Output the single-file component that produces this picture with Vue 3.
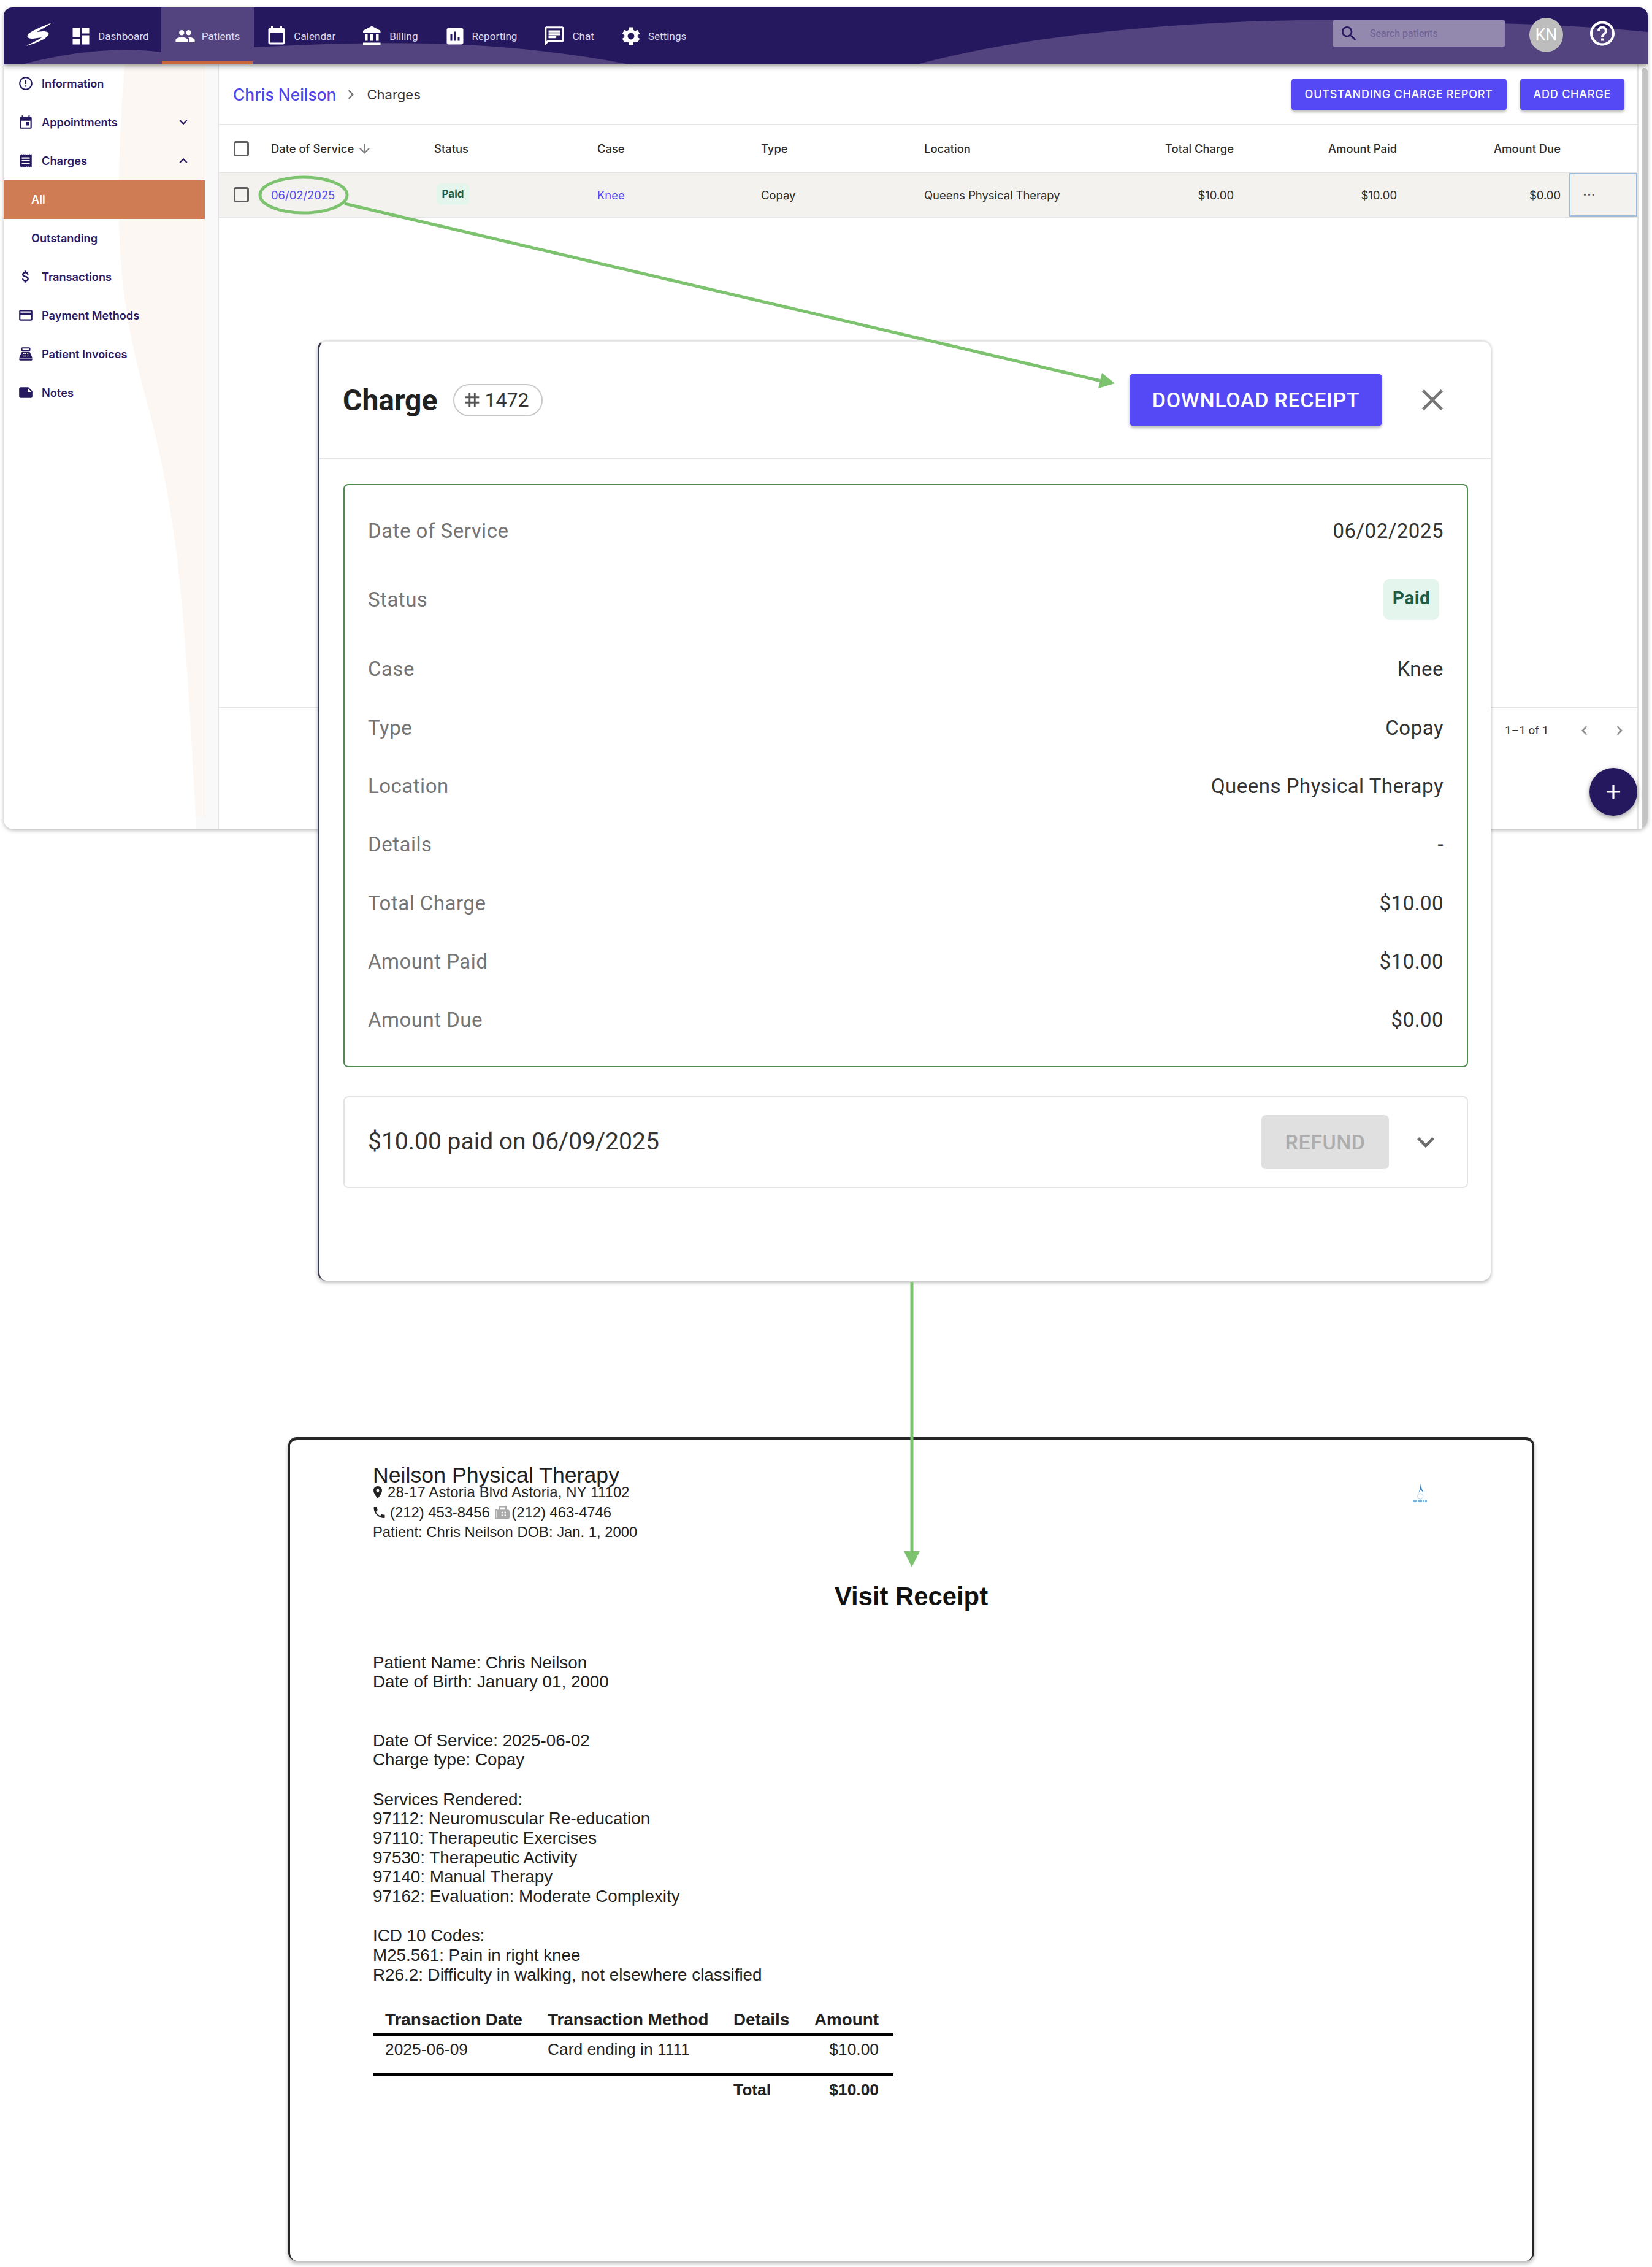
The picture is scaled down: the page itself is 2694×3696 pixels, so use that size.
<script setup>
const P = {
  dashboard: 'M3 13h8V3H3v10zm0 8h8v-6H3v6zm10 0h8V11h-8v10zm0-18v6h8V3h-8z',
  people: 'M16 11c1.66 0 2.99-1.34 2.99-3S17.66 5 16 5c-1.66 0-3 1.34-3 3s1.34 3 3 3zm-8 0c1.66 0 2.99-1.34 2.99-3S9.66 5 8 5C6.34 5 5 6.34 5 8s1.34 3 3 3zm0 2c-2.33 0-7 1.17-7 3.5V19h14v-2.5c0-2.33-4.67-3.5-7-3.5zm8 0c-.29 0-.62.02-.97.05 1.16.84 1.97 1.97 1.97 3.45V19h6v-2.5c0-2.33-4.67-3.5-7-3.5z',
  calendar: 'M19 3h-1V1h-2v2H8V1H6v2H5c-1.11 0-2 .9-2 2v14a2 2 0 0 0 2 2h14c1.1 0 2-.9 2-2V5c0-1.1-.9-2-2-2zm0 16H5V8h14v11z',
  bank: 'M4 10v7h3v-7H4zm6 0v7h3v-7h-3zM2 22h19v-3H2v3zm14-12v7h3v-7h-3zm-4.5-9L2 6v2h19V6l-9.5-5z',
  report: 'M19 3H5c-1.1 0-2 .9-2 2v14c0 1.1.9 2 2 2h14c1.1 0 2-.9 2-2V5c0-1.1-.9-2-2-2zM9 17H7v-7h2v7zm4 0h-2V7h2v10zm4 0h-2v-4h2v4z',
  chat: 'M20 2H4c-1.1 0-1.99.9-1.99 2L2 22l4-4h14c1.1 0 2-.9 2-2V4c0-1.1-.9-2-2-2zm0 14H5.17L4 17.17V4h16v12zM6 12h8v2H6zm0-3h12v2H6zm0-3h12v2H6z',
  settings: 'M19.14 12.94c.04-.3.06-.61.06-.94 0-.32-.02-.64-.07-.94l2.03-1.58c.18-.14.23-.41.12-.61l-1.92-3.32c-.12-.22-.37-.29-.59-.22l-2.39.96c-.5-.38-1.03-.7-1.62-.94l-.36-2.54c-.04-.24-.24-.41-.48-.41h-3.84c-.24 0-.43.17-.47.41l-.36 2.54c-.59.24-1.13.57-1.62.94l-2.39-.96c-.22-.08-.47 0-.59.22L2.74 8.87c-.12.21-.08.47.12.61l2.03 1.58c-.05.3-.09.63-.09.94s.02.64.07.94l-2.03 1.58c-.18.14-.23.41-.12.61l1.92 3.32c.12.22.37.29.59.22l2.39-.96c.5.38 1.03.7 1.62.94l.36 2.54c.05.24.24.41.48.41h3.84c.24 0 .44-.17.47-.41l.36-2.54c.59-.24 1.13-.56 1.62-.94l2.39.96c.22.08.47 0 .59-.22l1.92-3.32c.12-.22.07-.47-.12-.61l-2.01-1.58zM12 15.6c-1.98 0-3.6-1.62-3.6-3.6s1.62-3.6 3.6-3.6 3.6 1.62 3.6 3.6-1.62 3.6-3.6 3.6z',
  search: 'M15.5 14h-.79l-.28-.27C15.41 12.59 16 11.11 16 9.5 16 5.91 13.09 3 9.5 3S3 5.91 3 9.5 5.91 16 9.5 16c1.61 0 3.09-.59 4.23-1.57l.27.28v.79l5 4.99L20.49 19l-4.99-5zm-6 0C7.01 14 5 11.99 5 9.5S7.01 5 9.5 5 14 7.01 14 9.5 11.99 14 9.5 14z',
  help: 'M11 18h2v-2h-2v2zm1-16C6.48 2 2 6.48 2 12s4.48 10 10 10 10-4.48 10-10S17.52 2 12 2zm0 18c-4.41 0-8-3.59-8-8s3.59-8 8-8 8 3.59 8 8-3.59 8-8 8zm0-14c-2.21 0-4 1.79-4 4h2c0-1.1.9-2 2-2s2 .9 2 2c0 2-3 1.75-3 5h2c0-2.25 3-2.5 3-5 0-2.21-1.79-4-4-4z',
  info: 'M11 15h2v2h-2zm0-8h2v6h-2zm.99-5C6.47 2 2 6.48 2 12s4.47 10 9.99 10C17.52 22 22 17.52 22 12S17.52 2 11.99 2zM12 20c-4.42 0-8-3.58-8-8s3.58-8 8-8 8 3.58 8 8-3.58 8-8 8z',
  event: 'M19 4h-1V2h-2v2H8V2H6v2H5c-1.11 0-1.99.9-1.99 2L3 20a2 2 0 0 0 2 2h14c1.1 0 2-.9 2-2V6c0-1.1-.9-2-2-2zm0 16H5V10h14v10zM17 12h-5v5h5v-5z',
  receipt: 'M18 17H6v-2h12v2zm0-4H6v-2h12v2zm0-4H6V7h12v2zM3 22l1.5-1.5L6 22l1.5-1.5L9 22l1.5-1.5L12 22l1.5-1.5L15 22l1.5-1.5L18 22l1.5-1.5L21 22V2l-1.5 1.5L18 2l-1.5 1.5L15 2l-1.5 1.5L12 2l-1.5 1.5L9 2 7.5 3.5 6 2 4.5 3.5 3 2v20z',
  dollar: 'M11.8 10.9c-2.27-.59-3-1.2-3-2.15 0-1.09 1.01-1.85 2.7-1.85 1.78 0 2.44.85 2.5 2.1h2.21c-.07-1.72-1.12-3.3-3.21-3.81V3h-3v2.16c-1.94.42-3.5 1.68-3.5 3.61 0 2.31 1.91 3.46 4.7 4.13 2.5.6 3 1.48 3 2.41 0 .69-.49 1.79-2.7 1.79-2.06 0-2.87-.92-2.98-2.1h-2.2c.12 2.19 1.76 3.42 3.68 3.83V21h3v-2.15c1.95-.37 3.5-1.5 3.5-3.55 0-2.84-2.43-3.81-4.7-4.4z',
  card: 'M20 4H4c-1.11 0-1.99.89-1.99 2L2 18c0 1.11.89 2 2 2h16c1.11 0 2-.89 2-2V6c0-1.11-.89-2-2-2zm0 14H4v-6h16v6zm0-10H4V6h16v2z',
  register: 'M17 2H7c-1.1 0-2 .9-2 2v2c0 1.1.9 2 2 2h10c1.1 0 2-.9 2-2V4c0-1.1-.9-2-2-2zm0 4H7V4h10v2zm3 16H4c-1.1 0-2-.9-2-2v-1h20v1c0 1.1-.9 2-2 2zm-1.47-11.81C18.21 9.47 17.49 9 16.7 9H7.3c-.79 0-1.51.47-1.83 1.19L2 18h20l-3.47-7.81zM9.5 16h-1c-.28 0-.5-.22-.5-.5s.22-.5.5-.5h1c.28 0 .5.22.5.5s-.22.5-.5.5zm0-2h-1c-.28 0-.5-.22-.5-.5s.22-.5.5-.5h1c.28 0 .5.22.5.5s-.22.5-.5.5zm0-2h-1c-.28 0-.5-.22-.5-.5s.22-.5.5-.5h1c.28 0 .5.22.5.5s-.22.5-.5.5zm3 4h-1c-.28 0-.5-.22-.5-.5s.22-.5.5-.5h1c.28 0 .5.22.5.5s-.22.5-.5.5zm0-2h-1c-.28 0-.5-.22-.5-.5s.22-.5.5-.5h1c.28 0 .5.22.5.5s-.22.5-.5.5zm0-2h-1c-.28 0-.5-.22-.5-.5s.22-.5.5-.5h1c.28 0 .5.22.5.5s-.22.5-.5.5zm3 4h-1c-.28 0-.5-.22-.5-.5s.22-.5.5-.5h1c.28 0 .5.22.5.5s-.22.5-.5.5zm0-2h-1c-.28 0-.5-.22-.5-.5s.22-.5.5-.5h1c.28 0 .5.22.5.5s-.22.5-.5.5zm0-2h-1c-.28 0-.5-.22-.5-.5s.22-.5.5-.5h1c.28 0 .5.22.5.5s-.22.5-.5.5z',
  note: 'M22 10l-6-6H4c-1.1 0-2 .9-2 2v12.01c0 1.1.9 1.99 2 1.99l16-.01c1.1 0 2-.89 2-1.99v-8zm-7-4.5l5.5 5.5H15V5.5z',
  down: 'M7.41 8.59L12 13.17l4.59-4.58L18 10l-6 6-6-6 1.41-1.41z',
  up: 'M7.41 15.41L12 10.83l4.59 4.58L18 14l-6-6-6 6z',
  close: 'M19 6.41L17.59 5 12 10.59 6.41 5 5 6.41 10.59 12 5 17.59 6.41 19 12 13.41 17.59 19 19 17.59 13.41 12z',
  tag: 'M20 10V8h-4V4h-2v4h-4V4H8v4H4v2h4v4H4v2h4v4h2v-4h4v4h2v-4h4v-2h-4v-4h4zm-6 4h-4v-4h4v4z',
  place: 'M12 2C8.13 2 5 5.13 5 9c0 5.25 7 13 7 13s7-7.75 7-13c0-3.87-3.13-7-7-7zm0 9.5c-1.38 0-2.5-1.12-2.5-2.5s1.12-2.5 2.5-2.5 2.5 1.12 2.5 2.5-1.12 2.5-2.5 2.5z',
  phone: 'M6.62 10.79c1.44 2.83 3.76 5.14 6.59 6.59l2.2-2.2c.27-.27.67-.36 1.02-.24 1.12.37 2.33.57 3.57.57.55 0 1 .45 1 1V20c0 .55-.45 1-1 1-9.39 0-17-7.61-17-17 0-.55.45-1 1-1h3.5c.55 0 1 .45 1 1 0 1.25.2 2.45.57 3.57.11.35.03.74-.25 1.02l-2.2 2.2z',
  arrow: 'M20 12l-1.41-1.41L13 16.17V4h-2v12.17l-5.58-5.59L4 12l8 8 8-8z',
  prev: 'M15.41 7.41L14 6l-6 6 6 6 1.41-1.41L10.83 12z',
  next: 'M10 6L8.59 7.41 13.17 12l-4.58 4.59L10 18l6-6z',
  plus: 'M19 13h-6v6h-2v-6H5v-2h6V5h2v6h6v2z',
  fax: 'M19 8h-1V3H7v5H5v-1H3a1 1 0 0 0-1 1v12a1 1 0 0 0 1 1h16a3 3 0 0 0 3-3v-7a3 3 0 0 0-3-3zM4 19V9h1v10H4zm5-14h7v3H9V5zm4 12h-2v-2h2v2zm0-4h-2v-2h2v2zm4 4h-2v-2h2v2zm0-4h-2v-2h2v2z'
}

const nav = [
  { label: 'Dashboard', icon: 'dashboard', w: 36 },
  { label: 'Patients', icon: 'people', active: true, w: 34 },
  { label: 'Calendar', icon: 'calendar', w: 36 },
  { label: 'Billing', icon: 'bank', w: 36 },
  { label: 'Reporting', icon: 'report', w: 36 },
  { label: 'Chat', icon: 'chat', w: 38 },
  { label: 'Settings', icon: 'settings', w: 36 }
]
const side = [
  { label: 'Information', icon: 'info' },
  { label: 'Appointments', icon: 'event', chev: 'down' },
  { label: 'Charges', icon: 'receipt', chev: 'up' },
  { label: 'All', sub: true, active: true },
  { label: 'Outstanding', sub: true },
  { label: 'Transactions', icon: 'dollar' },
  { label: 'Payment Methods', icon: 'card' },
  { label: 'Patient Invoices', icon: 'register' },
  { label: 'Notes', icon: 'note' }
]
const rows = [
  { k: 'Date of Service', v: '06/02/2025' },
  { k: 'Status', chip: 'Paid' },
  { k: 'Case', v: 'Knee' },
  { k: 'Type', v: 'Copay' },
  { k: 'Location', v: 'Queens Physical Therapy' },
  { k: 'Details', v: '-' },
  { k: 'Total Charge', v: '$10.00' },
  { k: 'Amount Paid', v: '$10.00' },
  { k: 'Amount Due', v: '$0.00' }
]
const services = [
  '97112: Neuromuscular Re-education',
  '97110: Therapeutic Exercises',
  '97530: Therapeutic Activity',
  '97140: Manual Therapy',
  '97162: Evaluation: Moderate Complexity'
]
</script>

<template>
  <div class="page">
    <section class="window">
      <header class="topbar">
        <svg class="waves" viewBox="0 0 2681 93" preserveAspectRatio="none">
          <path d="M30 93C110 72 190 64 257 73L257 0 408 0 408 65C600 55 800 50 1020 93Z" fill="#53437f" />
          <path d="M1490 93C1700 36 2000 18 2200 21 2400 24 2560 28 2681 40L2681 93Z" fill="#53437f" />
        </svg>
        <svg class="logo" viewBox="0 0 44 38">
          <path d="M44 0C30 6 10 13 5 20 3 24 7 26 14 26L28 24C22 29 8 34 3 38 16 34 34 28 39 20 41 16 37 14 30 14L20 15C28 10 38 6 44 0Z" fill="#fff" />
        </svg>
        <nav class="tabs">
          <a v-for="n in nav" :key="n.label" class="tab" :class="{ active: n.active }">
            <svg class="tab-icon" :style="{ width: n.w + 'px', height: n.w + 'px' }" viewBox="0 0 24 24"><path :d="P[n.icon]" /></svg>
            <span>{{ n.label }}</span>
          </a>
        </nav>
        <div class="top-right">
          <div class="search">
            <svg viewBox="0 0 24 24"><path :d="P.search" /></svg>
            <span>Search patients</span>
          </div>
          <div class="avatar">KN</div>
          <svg class="help" viewBox="2 2 20 20"><path :d="P.help" /></svg>
        </div>
      </header>

      <div class="body">
        <aside class="sidebar">
          <svg class="swoosh" viewBox="0 0 329 1226" preserveAspectRatio="none">
            <path d="M198 0C190 100 186 200 189 275 192 350 200 420 226 520 245 590 262 650 281 785 294 880 305 1050 314 1226L329 1226 329 0Z" fill="#fdf7f4" />
          </svg>
          <div v-for="s in side" :key="s.label" class="side-row" :class="{ sub: s.sub, active: s.active }">
            <svg v-if="s.icon" class="side-icon" viewBox="0 0 24 24"><path :d="P[s.icon]" /></svg>
            <span>{{ s.label }}</span>
            <svg v-if="s.chev" class="side-chev" viewBox="0 0 24 24"><path :d="P[s.chev]" /></svg>
          </div>
        </aside>
        <div class="gutter"></div>

        <main class="main">
          <div class="crumbs">
            <a class="crumb-link">Chris Neilson</a>
            <svg class="crumb-sep" viewBox="0 0 24 24"><path :d="P.next" /></svg>
            <span class="crumb-now">Charges</span>
            <div class="actions">
              <button class="btn">OUTSTANDING CHARGE REPORT</button>
              <button class="btn">ADD CHARGE</button>
            </div>
          </div>

          <div class="grid head">
            <div class="cell check"><i class="box"></i></div>
            <div class="cell">Date of Service<svg class="sort" viewBox="0 0 24 24"><path :d="P.arrow" /></svg></div>
            <div class="cell">Status</div>
            <div class="cell">Case</div>
            <div class="cell">Type</div>
            <div class="cell">Location</div>
            <div class="cell r">Total Charge</div>
            <div class="cell r">Amount Paid</div>
            <div class="cell r">Amount Due</div>
            <div class="cell"></div>
          </div>
          <div class="grid row">
            <div class="cell check"><i class="box"></i></div>
            <div class="cell link">06/02/2025</div>
            <div class="cell"><span class="chip small">Paid</span></div>
            <div class="cell link">Knee</div>
            <div class="cell">Copay</div>
            <div class="cell">Queens Physical Therapy</div>
            <div class="cell r">$10.00</div>
            <div class="cell r">$10.00</div>
            <div class="cell r">$0.00</div>
            <div class="cell dots">···</div>
          </div>
          <div class="spacer"></div>
          <div class="pager">
            <span>1–1 of 1</span>
            <svg viewBox="0 0 24 24"><path :d="P.prev" /></svg>
            <svg viewBox="0 0 24 24"><path :d="P.next" /></svg>
          </div>
        </main>
        <div class="scrollbar"></div>
      </div>
      <button class="fab"><svg viewBox="0 0 24 24"><path :d="P.plus" /></svg></button>
    </section>

    <section class="modal">
      <div class="modal-head">
        <h2>Charge</h2>
        <span class="pill"><svg viewBox="0 0 24 24"><path :d="P.tag" /></svg>1472</span>
        <button class="btn big">DOWNLOAD RECEIPT</button>
        <svg class="x" viewBox="5 5 14 14"><path :d="P.close" /></svg>
      </div>
      <div class="modal-body">
        <div class="details">
          <div v-for="r in rows" :key="r.k" class="d-row" :class="{ tall: r.chip }">
            <span class="d-key">{{ r.k }}</span>
            <span v-if="r.chip" class="chip large">{{ r.chip }}</span>
            <span v-else class="d-val">{{ r.v }}</span>
          </div>
        </div>
        <div class="txn">
          <span>$10.00 paid on 06/09/2025</span>
          <button class="refund">REFUND</button>
          <svg viewBox="0 0 24 24"><path :d="P.down" /></svg>
        </div>
      </div>
    </section>

    <section class="receipt">
      <div class="r-top">
        <h1>Neilson Physical Therapy</h1>
        <p class="r-line addr"><svg viewBox="5 2 14 20"><path :d="P.place" /></svg>28-17 Astoria Blvd Astoria, NY 11102</p>
        <p class="r-line"><svg class="ph" viewBox="3 3 18 18"><path :d="P.phone" /></svg>(212) 453-8456 <svg class="fax" viewBox="2 3 20 18"><path :d="P.fax" /></svg>(212) 463-4746</p>
        <p class="r-line">Patient: Chris Neilson DOB: Jan. 1, 2000</p>
        <svg class="r-logo" viewBox="0 0 30 32">
          <path d="M16 0l1.5 9 3 6-5.5-4-3 6 2.5-8z" fill="#3f86c0" />
          <path d="M15 17a4.5 4.5 0 1 0 .1 0" fill="none" stroke="#c4dcee" stroke-width="1.2" />
          <path d="M3 29h24" stroke="#7fb2d9" stroke-width="3.4" stroke-dasharray="3 1" />
        </svg>
      </div>
      <h3 class="r-title">Visit Receipt</h3>
      <div class="r-body">
        <p>Patient Name: Chris Neilson<br />Date of Birth: January 01, 2000</p>
        <p class="gap-a">Date Of Service: 2025-06-02<br />Charge type: Copay</p>
        <p class="gap-b">Services Rendered:<br /><template v-for="s in services" :key="s">{{ s }}<br /></template></p>
        <p class="gap-c">ICD 10 Codes:<br />M25.561: Pain in right knee<br />R26.2: Difficulty in walking, not elsewhere classified</p>
        <div class="r-table">
          <div class="t-row t-head"><b>Transaction Date</b><b>Transaction Method</b><b>Details</b><b class="tr">Amount</b></div>
          <div class="t-row t-data"><span>2025-06-09</span><span>Card ending in 1111</span><span></span><span class="tr">$10.00</span></div>
          <div class="t-row t-total"><span></span><span></span><b>Total</b><b class="tr">$10.00</b></div>
        </div>
      </div>
    </section>

    <svg class="arrows" viewBox="0 0 2694 3696">
      <ellipse cx="495" cy="318" rx="71" ry="29" fill="none" stroke="#7dc36f" stroke-width="5" />
      <path d="M562 332L1800 622" stroke="#7dc36f" stroke-width="5" />
      <path d="M1818 625L1797 608 1791 633Z" fill="#7dc36f" />
      <path d="M1487 2090V2532" stroke="#7dc36f" stroke-width="5" />
      <path d="M1474 2529H1500L1487 2555Z" fill="#7dc36f" />
    </svg>
  </div>
</template>

<style scoped>
.page { position: relative; width: 2694px; height: 3696px; background: #fff; overflow: hidden; font-family: Roboto, "Liberation Sans", sans-serif; }
.window { position: relative; margin: 12px 0 0 6px; width: 2681px; height: 1340px; background: #fff; border-radius: 14px 14px 16px 16px; box-shadow: 0 2px 6px rgba(0, 0, 0, .28); overflow: hidden; }

.topbar { position: relative; height: 93px; display: flex; align-items: center; background: #26185f; box-shadow: 0 3px 8px rgba(0, 0, 0, .4); z-index: 2; }
.waves { position: absolute; inset: 0; width: 100%; height: 100%; }
.logo { position: relative; width: 44px; height: 38px; margin: -5px 0 0 34px; flex: none; }
.tabs { position: relative; display: flex; height: 100%; margin-left: 11px; }
.tab { display: flex; align-items: center; gap: 10px; padding: 0 21px; font-size: 17.1px; color: #ddd9e9; }
.tab:first-child { padding-left: 19px; }
.tab-icon { fill: #fff; flex: none; }
.tab.active { box-shadow: inset 0 -5px 0 #c9673b; }
.top-right { position: relative; margin-left: auto; display: flex; align-items: center; }
.search { width: 280px; height: 43px; margin-top: -8px; display: flex; align-items: center; gap: 18px; padding-left: 10px; box-sizing: border-box; background: #9389ae; border-radius: 2px; font-size: 16px; color: #6d6093; }
.search svg { width: 32px; height: 32px; fill: #26185f; }
.avatar { width: 55px; height: 56px; margin: -4px 0 0 40px; border-radius: 50%; background: #bdbdbd; color: #fff; font-size: 27px; display: flex; align-items: center; justify-content: center; }
.help { width: 40px; height: 41px; margin: -9px 54px 0 44px; fill: #fff; }

.body { display: flex; height: 1247px; }
.sidebar { position: relative; width: 328px; height: 1226px; flex: none; border-right: 1px solid #f1eeee; box-sizing: content-box; }
.sidebar::after { content: ""; position: absolute; left: 314px; top: 100%; width: 15px; height: 21px; background: #f9f9f9; }
.swoosh { position: absolute; inset: 0; width: 100%; height: 100%; }
.side-row { position: relative; height: 63px; display: flex; align-items: center; gap: 13px; padding: 0 0 2px 23px; box-sizing: border-box; font: 600 18.2px Inter, Roboto, sans-serif; color: #2a1b66; }
.side-row.sub { padding-left: 45px; }
.side-row.active { background: #cf7c54; color: #fff; }
.side-icon { width: 26px; height: 26px; fill: #26185f; flex: none; }
.side-chev { position: absolute; left: 280px; width: 26px; height: 26px; fill: #26185f; }
.gutter { width: 20px; flex: none; background: #f9f9f9; border-right: 2px solid #e4e4e4; }
.main { flex: 1; min-width: 0; display: flex; flex-direction: column; }
.scrollbar { width: 17px; flex: none; border-left: 2px solid #e4e4e4; position: relative; box-sizing: border-box; }
.scrollbar::after { content: ""; position: absolute; left: 5px; top: 6px; bottom: 0; width: 10px; background: #c4c4c4; border-radius: 5px; }

.crumbs { height: 99px; flex: none; display: flex; align-items: center; padding: 0 21px 0 23px; border-bottom: 2px solid #e6e6e6; box-sizing: border-box; }
.crumb-link { font: 500 26.4px Inter, Roboto, sans-serif; color: #4f45e8; }
.crumb-sep { width: 30px; height: 30px; fill: #777; margin: 0 11px 0 9px; }
.crumb-now { font: 400 22px Inter, Roboto, sans-serif; color: #333; }
.actions { margin-left: auto; display: flex; gap: 22px; }
.btn { height: 52px; padding: 0 22px; border: 0; border-radius: 5px; background: #5549f6; color: #fff; font: 500 18px Inter, Roboto, sans-serif; letter-spacing: .75px; box-shadow: 0 3px 4px rgba(0, 0, 0, .25); white-space: nowrap; }
.btn.big { height: 86px; padding: 0; width: 412px; margin-left: auto; font: 500 34px Roboto, sans-serif; letter-spacing: .7px; border-radius: 7px; }

.grid { display: grid; grid-template-columns: 69px 266px 266px 267px 266px 266px 271px 266px 267px 109px; flex: none; font: 400 18.4px Inter, Roboto, sans-serif; color: #2b2b2b; box-sizing: border-box; }
.head { height: 78px; font-weight: 500; border-bottom: 2px solid #e4e4e4; }
.row { height: 73px; background: #f3f2ee; border-bottom: 2px solid #e4e4e4; }
.cell { display: flex; align-items: center; padding: 0 16px; min-width: 0; white-space: nowrap; }
.cell.r { justify-content: flex-end; }
.cell.check { padding: 0 0 0 24px; }
.box { width: 25px; height: 25px; border: 3px solid #5f5f5f; border-radius: 4px; box-sizing: border-box; }
.sort { width: 25px; height: 25px; fill: #808080; margin-left: 5px; }
.link { color: #5348f0; }
.dots { margin-left: -2px; border: 2px solid #9bbde0; font-size: 24px; color: #555; padding-left: 20px; }
.chip { display: inline-flex; align-items: center; justify-content: center; background: #e3f5ec; color: #1f5c47; font-weight: 700; }
.chip.small { width: 53px; height: 35px; margin-left: 4px; border-radius: 7px; font-size: 17px; margin-top: -3px; }
.chip.large { width: 91px; height: 67px; padding-bottom: 5px; box-sizing: border-box; border-radius: 10px; font: 700 30px Roboto, sans-serif; letter-spacing: .4px; margin-right: 7px; }
.spacer { height: 799px; flex: none; border-bottom: 2px solid #e4e4e4; box-sizing: border-box; }
.pager { display: flex; align-items: flex-start; padding: 25px 0 0 2097px; font-size: 19px; color: #333; }
.pager svg { width: 30px; height: 30px; fill: #8a8a8a; margin-top: -3px; }
.pager svg:first-of-type { margin-left: 44px; }
.pager svg:last-of-type { margin-left: 27px; }

.fab { position: absolute; left: 2586px; top: 1240px; width: 78px; height: 78px; border: 0; border-radius: 50%; background: #26185f; box-shadow: 0 3px 8px rgba(0, 0, 0, .4); display: flex; align-items: center; justify-content: center; padding: 0; }
.fab svg { width: 38px; height: 38px; fill: #fff; }

.modal { position: absolute; left: 518px; top: 555px; width: 1913px; height: 1533px; box-sizing: border-box; background: #fff; border-left: 3px solid #3c3c50; border-top: 2px solid #e6e6e6; border-radius: 14px; box-shadow: 0 3px 6px rgba(0, 0, 0, .28), 1px 0 3px rgba(0, 0, 0, .08); z-index: 3; }
.modal-head { height: 192px; display: flex; align-items: center; padding: 0 78px 0 38px; border-bottom: 2px solid #e4e4e4; box-sizing: border-box; }
.modal-head h2 { margin: 0; font-size: 48px; font-weight: 700; color: #212121; }
.pill { margin-left: 26px; height: 53px; width: 146px; box-sizing: border-box; border: 2px solid #c8c8c8; border-radius: 27px; display: flex; align-items: center; padding-left: 12px; gap: 3px; font-size: 32px; color: #333; }
.pill svg { width: 34px; height: 34px; fill: #555; }
.x { width: 34px; height: 34px; fill: #757575; margin-left: 65px; flex: none; }
.modal-body { padding: 40px 37px 0 39px; }
.details { height: 951px; border: 2px solid #4f8a4f; border-radius: 8px; padding: 27px 38px; box-sizing: border-box; }
.d-row { height: 95.3px; display: flex; align-items: center; justify-content: space-between; font-size: 33px; letter-spacing: .5px; }
.d-row.tall { height: 130px; padding-bottom: 2px; box-sizing: border-box; }
.d-key { color: #757575; }
.d-val { color: #333; }
.txn { margin-top: 47px; height: 150px; display: flex; align-items: center; padding: 0 38px; box-sizing: border-box; border: 2px solid #e4e4e4; border-radius: 8px; font-size: 39px; color: #333; }
.txn span { margin-top: -3px; }
.refund { margin-left: auto; width: 208px; height: 88px; border: 0; border-radius: 7px; background: #e0e0e0; color: #adadad; font: 500 34px Roboto, sans-serif; letter-spacing: .5px; }
.txn svg { width: 56px; height: 56px; fill: #6a6a6a; margin: 0 1px 0 32px; }

.receipt { width: 2032px; height: 1343px; margin: 991px 0 0 470px; box-sizing: border-box; background: #fff; border: 3px solid #262626; border-top-width: 5px; border-bottom: 0; border-radius: 14px; box-shadow: 0 4px 6px rgba(0, 0, 0, .3); font-family: "Liberation Sans", Arial, sans-serif; color: #222; }
.r-top { position: relative; padding: 37px 0 0 135px; }
.r-top h1 { margin: 4px 0 -4px; font-size: 35.7px; line-height: 32px; font-weight: 400; color: #1f1f1f; }
.r-line { margin: 0; height: 32.5px; line-height: 32.5px; font-size: 23.8px; display: flex; align-items: center; gap: 7px; white-space: pre; }
.r-line.addr { gap: 8px; letter-spacing: .2px; }
.r-line svg { height: 20px; width: 16px; fill: #222; }
.r-line svg.ph { width: 21px; height: 18px; }
.r-line svg.fax { width: 24px; height: 26px; fill: #aaa; margin: 0 -4px 0 -5px; }
.r-logo { position: absolute; left: 1828px; top: 70px; width: 30px; height: 32px; }
.r-title { margin: 63px 0 0; text-align: center; font-size: 41.8px; line-height: 50px; font-weight: 700; color: #111; }
.r-body { padding: 67px 0 0 135px; font-size: 27.8px; line-height: 31.6px; }
.r-body p { margin: 0; }
.gap-a { padding-top: 64px; }
.gap-b { padding-top: 33px; }
.gap-c { padding-top: 33px; }
.r-table { margin-top: 41px; width: 849px; font-size: 26.4px; }
.r-table b { font-size: 27.8px; }
.t-total b { font-size: 26.4px !important; }
.t-row { display: grid; grid-template-columns: 265px 303px 130px 107px; padding: 0 24px 0 20px; }
.t-head { height: 38px; line-height: 34px; border-bottom: 5px solid #000; }
.t-data { height: 61px; line-height: 44px; border-bottom: 5px solid #000; }
.t-total { line-height: 44px; }
.tr { text-align: right; }

.arrows { position: absolute; left: 0; top: 0; width: 2694px; height: 3696px; pointer-events: none; z-index: 5; }
</style>
